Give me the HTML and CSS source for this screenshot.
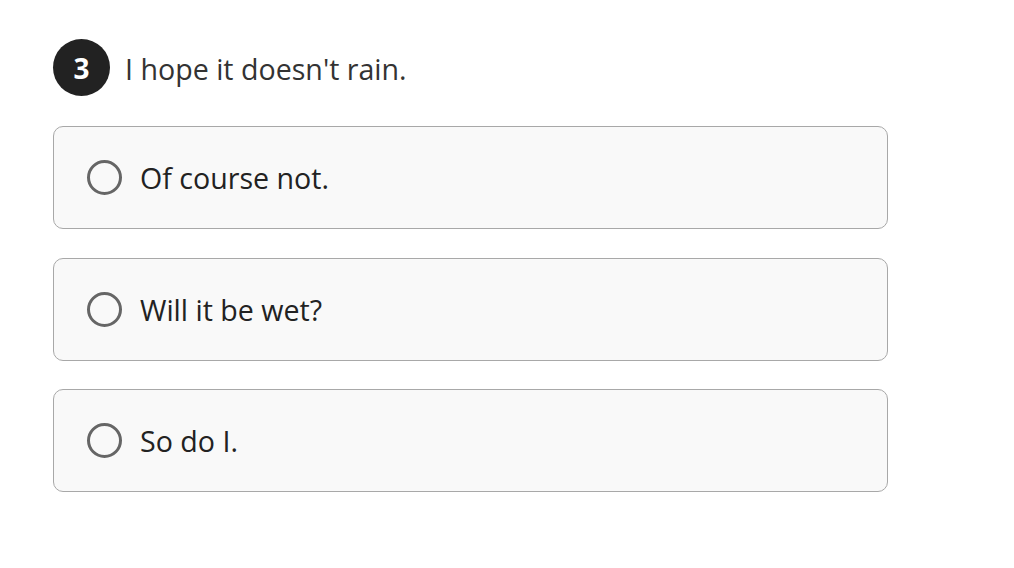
FILE: index.html
```html
<!DOCTYPE html>
<html>
<head>
<meta charset="utf-8">
<link rel="stylesheet" href="styles.css">
</head>
<body>
<div class="quiz">
  <div class="question">
    <span class="num">3</span>
    <span class="qtext">I hope it doesn't rain.</span>
  </div>
  <div class="options">
    <label class="option"><span class="radio"></span><span class="otext">Of course not.</span></label>
    <label class="option"><span class="radio"></span><span class="otext">Will it be wet?</span></label>
    <label class="option"><span class="radio"></span><span class="otext">So do I.</span></label>
  </div>
</div>
</body>
</html>
```
FILE: styles.css
```css
html, body { margin: 0; padding: 0; background: #fff; }
body { font-family: "Open Sans", sans-serif; color: #222; }
.quiz { padding: 39px 0 0 53px; width: 835px; }
.question { display: flex; align-items: center; gap: 15px; height: 57px; }
.num {
  width: 57px; height: 57px; border-radius: 50%; background: #222;
  color: #fff; font-weight: 700; font-size: 28px;
  display: flex; align-items: center; justify-content: center; flex: none;
}
.qtext { font-size: 28.6px; color: #333; padding-top: 2px; }
.options { display: flex; flex-direction: column; gap: 28.5px; margin-top: 30px; }
.option {
  display: flex; align-items: center; height: 101px;
  border: 1px solid #a8a8a8; border-radius: 10px; background: #f9f9f9;
  padding-left: 33px;
}
.radio {
  width: 29px; height: 29px; border: 3px solid #666; border-radius: 50%;
  flex: none; margin-right: 18px;
}
.otext { font-size: 28.6px; color: #222; }
```
